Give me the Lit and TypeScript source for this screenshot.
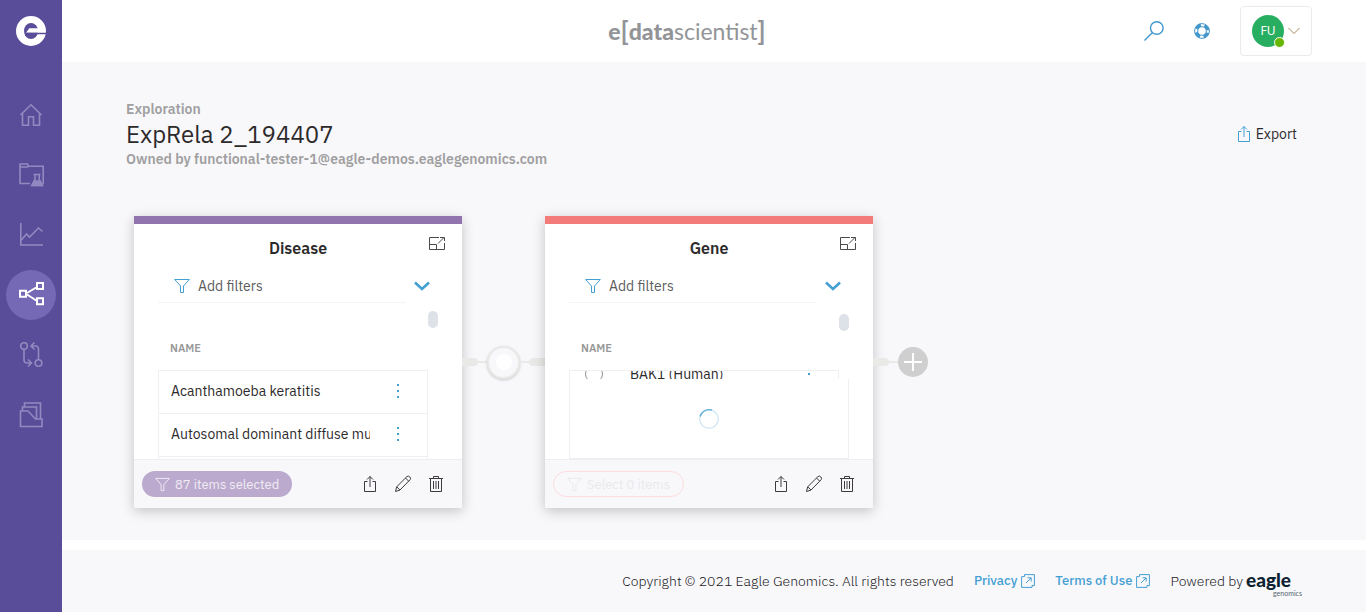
import { LitElement, html, svg, css, nothing } from "lit";
import { customElement, property } from "lit/decorators.js";
import { classMap } from "lit/directives/class-map.js";

const resets = css`
  * {
    box-sizing: border-box;
  }
  button {
    font: inherit;
    color: inherit;
    background: none;
    border: 0;
    padding: 0;
    margin: 0;
    cursor: pointer;
    display: inline-flex;
    align-items: center;
    justify-content: center;
  }
  a {
    color: inherit;
    text-decoration: none;
  }
  svg {
    display: block;
    flex: none;
    fill: none;
    stroke: currentColor;
  }
`;

const shareIcon = html`<svg width="14" height="18" viewBox="0 0 14 18" aria-hidden="true">
  <path d="M4.5 6.5h-3v10h11v-10h-3M7 12V1.5M4 4.5l3-3 3 3" />
</svg>`;

const funnelIcon = (size: number) => html`<svg width=${size} height=${size} viewBox="0 0 16 16" aria-hidden="true">
  <path d="M.7 1.5h14.6L9.5 8v6.5h-3V8z" />
</svg>`;

const popoutIcon = html`<svg width="14" height="14" viewBox="0 0 14 14" aria-hidden="true">
  <path d="M3.5 2.6V.6h9.9v11H11M3.5 2.6H.6v10.8h10.400v-2M5 9l5-5M6.5 3.8h3.7v3.7" />
</svg>`;

const navIcons = {
  home: svg`<path d="M1.500 13 12 2.800 22.500 13M3.500 11.500V23.300h6v-8.500h5v8.500h6V11.500" />`,
  projects: svg`<path d="M11 21.500H1V2h7.500l1 2.200h14.700v18M1 5h7.500l1-.8" />
    <path d="M14.500 12.500h7M16 13v4.500l-3.200 6h10.600l-3.200-6V13" />
    <path d="M15.300 19h5.500l2.300 4.500H13z" fill="currentColor" />`,
  charts: svg`<path d="M1.800 1v22H24M2 18.500l5.500-6.500 3 3 9-9 4 3.500" />`,
  relations: svg`<path d="M1 8.700h6v6H1zM18 1h6v6h-6zM18 16.300h6v6h-6zM8 11l10-6M8 12.500l10 6.500" />`,
  compare: svg`<circle cx="5" cy="4" r="3.300" /><circle cx="19.500" cy="21" r="3.300" />
    <path d="M5 7.500V18q0 3 3 3h4M9 17.500l3.500 3.500L9 24.500M19.500 17.500V7q0-3-3-3h-4M15.500.5 12 4l3.500 3.500" />`,
  files: svg`<path d="M1.500 9v15.500H23V17h-6.500L9 9zM3.500 9V5h14v12M5.500 5V1H21.500V17" />`,
};

@customElement("side-nav")
export class SideNav extends LitElement {
  static styles = [
    resets,
    css`
      :host {
        display: block;
        background: #594c99;
        color: #9389c0;
      }
      .brand {
        display: flex;
        height: 62px;
        align-items: center;
        justify-content: center;
        color: #fff;
      }
      nav {
        display: flex;
        flex-direction: column;
        align-items: center;
        gap: 10px;
        padding-top: 28px;
      }
      .item {
        display: flex;
        width: 50px;
        height: 50px;
        border-radius: 50%;
        align-items: center;
        justify-content: center;
      }
      .item svg {
        stroke-width: 1.6;
      }
      .active {
        background: #7568b5;
        color: #fff;
      }
      .active svg {
        stroke-width: 2;
      }
    `,
  ];

  render() {
    const items: [string, unknown][] = [
      ["Home", navIcons.home],
      ["Projects", navIcons.projects],
      ["Charts", navIcons.charts],
      ["Explorations", navIcons.relations],
      ["Compare", navIcons.compare],
      ["Files", navIcons.files],
    ];
    return html`
      <a class="brand" href="#" aria-label="Eagle Genomics">
        <svg width="30" height="30" viewBox="0 0 30 30" aria-hidden="true">
          <circle cx="15" cy="15" r="15" fill="currentColor" stroke="none" />
          <ellipse cx="15" cy="15" rx="7" ry="8" fill="#594c99" stroke="none" />
          <path d="M10 16.800l3.300-4.500H23v4.500z" fill="currentColor" stroke="none" />
          <path d="M9 16.800h21v1.500H20.500V20H9z" fill="#594c99" stroke="none" />
        </svg>
      </a>
      <nav>
        ${items.map(
          ([label, icon]) => html`<a
            href="#"
            aria-label=${label}
            class=${classMap({ item: true, active: label === "Explorations" })}
          >
            <svg width="26" height="26" viewBox="-1 0 26 26" aria-hidden="true">${icon}</svg>
          </a>`
        )}
      </nav>
    `;
  }
}

@customElement("top-bar")
export class TopBar extends LitElement {
  static styles = [
    resets,
    css`
      :host {
        display: grid;
        grid-template-columns: 1fr auto 1fr;
        align-items: center;
        height: 62px;
        padding-right: 54px;
        background: #fff;
      }
      .logo {
        grid-column: 2;
        display: flex;
        align-items: center;
        font: 400 23px/28px Lato, sans-serif;
        color: #929497;
      }
      .logo b {
        font-weight: 900;
      }
      .logo .bracket {
        font-weight: 700;
        font-size: 26px;
      }
      .tools {
        display: flex;
        justify-content: flex-end;
        align-items: center;
        gap: 30px;
        color: #4398cb;
      }
      .account {
        width: 72px;
        height: 50px;
        border: 1px solid #ebebeb;
        border-radius: 4px;
        gap: 4px;
        color: #a48c5a;
      }
      .avatar {
        position: relative;
        display: grid;
        place-items: center;
        width: 32px;
        height: 32px;
        border-radius: 50%;
        background: #27ae60;
        color: #fff;
        font: 400 12px/16px "Noto Sans", sans-serif;
      }
      .status {
        position: absolute;
        right: -1px;
        bottom: -1px;
        width: 11px;
        height: 11px;
        border: 1px solid #fff;
        border-radius: 50%;
        background: #68b604;
      }
    `,
  ];

  render() {
    return html`
      <div class="logo">
        <b>e</b><span class="bracket">[</span><b>data</b><span>scientist</span><span class="bracket">]</span>
      </div>
      <div class="tools">
        <button aria-label="Search">
          <svg width="20" height="20" viewBox="0 0 20 20" stroke-width="1.400" aria-hidden="true">
            <circle cx="12.800" cy="7" r="6.300" />
            <path d="M8.300 11.700.5 19.500" />
          </svg>
        </button>
        <button aria-label="Help">
          <svg width="16" height="16" viewBox="0 0 16 16" aria-hidden="true">
            <circle cx="8" cy="8" r="7.400" />
            <circle cx="8" cy="8" r="4.300" />
            <circle cx="8" cy="8" r="5.900" stroke-width="3.200" stroke-dasharray="5.630 3.637" stroke-dashoffset="-1.820" />
          </svg>
        </button>
        <button class="account" aria-label="Account">
          <span class="avatar">FU<span class="status"></span></span>
          <svg width="12" height="8" viewBox="0 0 12 8" aria-hidden="true"><path d="M.5 1 6 6.500 11.500 1" /></svg>
        </button>
      </div>
    `;
  }
}

interface Row {
  name: string;
  selectable?: boolean;
}

@customElement("entity-card")
export class EntityCard extends LitElement {
  @property() heading = "";
  @property() action = "";
  @property() tone = "violet";
  @property({ type: Boolean }) loading = false;
  @property({ attribute: false }) rows: Row[] = [];

  static styles = [
    resets,
    css`
      :host {
        display: block;
        flex: none;
        width: 328px;
      }
      .card {
        background: #fff;
        border-top: 8px solid #9173ae;
        box-shadow: 0 3px 12px rgba(0, 0, 0, 0.22);
      }
      .card.coral {
        border-top-color: #f37c7a;
      }
      .head {
        display: grid;
        grid-template-columns: 1fr auto 1fr;
        height: 48px;
        align-items: center;
        padding: 0 17px;
      }
      h2 {
        grid-column: 2;
        margin: 0;
        font-size: 16px;
        line-height: 20px;
        font-weight: 600;
        color: #2d2a2b;
      }
      .expand {
        justify-self: end;
        align-self: start;
        margin-top: 12px;
        color: #4a4a4a;
      }
      .filters {
        display: flex;
        padding: 0 24px;
        height: 31px;
      }
      .add {
        flex: 0 0 248px;
        justify-content: flex-start;
        gap: 8px;
        padding: 0 0 2px 16px;
        border-bottom: 1px solid #f4f4f4;
        color: #5c5c5c;
      }
      .add svg,
      .toggle {
        color: #459fd3;
      }
      .toggle {
        width: 32px;
        padding-bottom: 3px;
      }
      .body {
        position: relative;
        display: flex;
        align-items: flex-start;
        height: 156px;
        padding: 0 24px;
        overflow: hidden;
      }
      .thumb {
        flex: none;
        width: 10px;
        height: 17px;
        margin-top: 8px;
        border-radius: 5px;
        background: #dde1e8;
      }
      .coral .thumb {
        margin-top: 11px;
      }
      table,
      thead,
      thead tr {
        display: block;
      }
      table {
        flex: none;
        width: 270px;
      }
      thead th {
        display: block;
        padding: 37px 12px 14px;
        text-align: left;
        font-size: 11px;
        line-height: 16px;
        font-weight: 600;
        color: #989898;
      }
      tbody {
        display: flex;
        flex-direction: column;
        border: 1px solid #efefef;
        border-bottom: 0;
      }
      tbody tr {
        flex: none;
        display: flex;
        align-items: center;
        height: 43px;
        border-bottom: 1px solid #efefef;
        padding: 0 2px 2px 12px;
      }
      td {
        padding: 0;
        line-height: 20px;
      }
      .name {
        flex: none;
        width: 199px;
        overflow: hidden;
        white-space: nowrap;
        color: #2d2a2b;
      }
      .pick + .name {
        width: 151px;
      }
      .pick {
        flex: none;
        width: 48px;
        padding-left: 3px;
        height: 18px;
      }
      .pick input {
        display: block;
        appearance: none;
        width: 18px;
        height: 18px;
        margin: 0;
        border: 1px solid #8a9299;
        border-radius: 50%;
      }
      .menu {
        flex: 1;
        display: flex;
        justify-content: center;
        color: #459fd3;
      }
      .loading tbody {
        height: 10px;
        justify-content: center;
        overflow: hidden;
      }
      .loader {
        position: absolute;
        left: 24px;
        bottom: 0;
        width: 280px;
        height: 80px;
        display: grid;
        place-items: center;
        background: #fff;
        border: 1px solid #efefef;
        border-top: 0;
      }
      .foot {
        display: flex;
        align-items: center;
        justify-content: space-between;
        height: 49px;
        padding: 0 14px 0 8px;
        background: #f8f8fb;
        border-top: 1px solid #eee;
      }
      .select {
        height: 26px;
        padding: 1px 13px 0;
        gap: 5px;
        border-radius: 13px;
        background: #bbaacd;
        color: #f1ecf6;
        font-size: 13px;
        line-height: 16px;
        white-space: nowrap;
      }
      .coral .select {
        border: 1px solid #fddddd;
        background: none;
        color: #e9e9ea;
      }
      .actions {
        display: flex;
        gap: 9px;
        color: #3f3a40;
      }
      .actions button {
        width: 24px;
        height: 24px;
      }
    `,
  ];

  private renderRow(row: Row) {
    return html`<tr>
      ${row.selectable
        ? html`<td class="pick"><input type="checkbox" aria-label=${row.name} /></td>`
        : nothing}
      <td class="name">${row.name}</td>
      <td class="menu">
        <button aria-label="Row menu">
          <svg width="4" height="16" viewBox="0 0 4 16" aria-hidden="true">
            <path d="M1 1h2v2H1zM1 7h2v2H1zM1 13h2v2H1z" fill="currentColor" stroke="none" />
          </svg>
        </button>
      </td>
    </tr>`;
  }

  render() {
    return html`
      <section class=${classMap({ card: true, coral: this.tone === "coral", loading: this.loading })}>
        <header class="head">
          <h2>${this.heading}</h2>
          <button class="expand" aria-label="Expand">
            <svg width="16" height="15" viewBox="0 0 16 15" aria-hidden="true">
              <path d="M10 1.500H.5v12h15V7M.5 8.500h7v5M9 7.500l6-6M11 1.500h4.500V5" />
            </svg>
          </button>
        </header>
        <div class="filters">
          <button class="add">${funnelIcon(16)}Add filters</button>
          <button class="toggle" aria-label="Show filters">
            <svg width="16" height="10" viewBox="0 0 16 10" stroke-width="2.600" aria-hidden="true">
              <path d="M1 1.500l7 6.500 7-6.500" />
            </svg>
          </button>
        </div>
        <div class="body">
          <table>
            <thead>
              <tr><th scope="col">NAME</th></tr>
            </thead>
            <tbody>
              ${this.rows.map((row) => this.renderRow(row))}
            </tbody>
          </table>
          <span class="thumb"></span>
          ${this.loading
            ? html`<div class="loader" role="status" aria-label="Loading">
                <svg width="20" height="20" viewBox="0 0 20 20" aria-hidden="true">
                  <circle cx="10" cy="10" r="9.300" stroke="#d3e8f4" stroke-width="1.400" />
                  <path d="M1 7.500A9.300 9.300 0 0 1 13 1.200" stroke="#5fb0da" stroke-width="1.400" />
                </svg>
              </div>`
            : nothing}
        </div>
        <footer class="foot">
          <button class="select">${funnelIcon(15)}${this.action}</button>
          <div class="actions">
            <button aria-label="Export">${shareIcon}</button>
            <button aria-label="Edit">
              <svg width="18" height="18" viewBox="0 0 18 18" aria-hidden="true">
                <path d="M1.500 16.500l1.200-4.700L13 1.500q1.500-1 2.800.4 1.300 1.400.4 2.700L6 15zM2.700 11.800 6 15M11.500 3l3.200 3.200" />
              </svg>
            </button>
            <button aria-label="Delete">
              <svg width="14" height="18" viewBox="0 0 14 18" aria-hidden="true">
                <path d="M0 3.500h14M4.500 3.500v-2h5v2M1.500 3.500v13h11v-13M4.500 6v8M7 6v8M9.500 6v8" />
              </svg>
            </button>
          </div>
        </footer>
      </section>
    `;
  }
}

@customElement("app-root")
export class AppRoot extends LitElement {
  static styles = [
    resets,
    css`
      :host {
        display: grid;
        grid-template-columns: 62px minmax(0, 1fr);
        min-height: 100vh;
        background: #fff;
        font: 400 14px/20px "IBM Plex Sans", "Noto Sans", sans-serif;
        color: #2d2a2b;
      }
      .page {
        display: flex;
        flex-direction: column;
      }
      main {
        flex: 1;
        background: #f8f8fb;
        padding: 38px 64px 32px;
        margin-bottom: 10px;
      }
      .intro {
        display: flex;
        align-items: center;
        justify-content: space-between;
      }
      .meta {
        margin: 0;
        line-height: 18px;
        font-weight: 600;
        color: #a09fa0;
      }
      h1 {
        margin: 0;
        font-size: 24px;
        line-height: 32px;
        font-weight: 400;
      }
      .export {
        gap: 5px;
        padding: 0 5px;
      }
      .export svg {
        color: #459fd3;
      }
      .chain {
        display: flex;
        align-items: center;
        margin-top: 48px;
        padding-left: 8px;
      }
      .link {
        flex: none;
        display: flex;
        align-items: center;
        width: 83px;
      }
      .link.open {
        width: auto;
      }
      .cap {
        width: 16px;
        height: 8px;
        background: #e9e9e7;
        border-radius: 0 4px 4px 0;
      }
      .cap.end {
        border-radius: 4px 0 0 4px;
      }
      .wire {
        flex: 1 0 9px;
        height: 2px;
        background: #e9e9e7;
      }
      .joint {
        display: grid;
        place-items: center;
        width: 33px;
        height: 33px;
        border: 2px solid #e9e9e7;
        border-radius: 50%;
        background: #f8f8fb;
        box-shadow: 0 1px 3px rgba(0, 0, 0, 0.2);
      }
      .joint::before {
        content: "";
        width: 16px;
        height: 16px;
        border-radius: 50%;
        background: #fff;
      }
      .plus {
        width: 30px;
        height: 30px;
        border-radius: 50%;
        background: #cfcfcf;
        color: #fff;
      }
      .bottom {
        display: flex;
        align-items: center;
        justify-content: flex-end;
        gap: 20px;
        height: 62px;
        padding-right: 64px;
        background: #f8f8fb;
        font-weight: 300;
        color: #1c1a1b;
        white-space: nowrap;
      }
      .legal {
        display: flex;
        align-items: center;
        gap: 4px;
        color: #459fd3;
        font-size: 13px;
        font-weight: 500;
      }
      .powered {
        display: flex;
        align-items: center;
        gap: 3px;
      }
      .eagle {
        display: flex;
        flex-direction: column;
        width: 56px;
        padding-top: 4px;
        color: #0c2231;
        font: 900 19px/20px Lato, sans-serif;
      }
      .eagle small {
        align-self: flex-end;
        font: 400 7px/6px Lato, sans-serif;
        color: #56646e;
      }
    `,
  ];

  private diseases: Row[] = [
    { name: "Acanthamoeba keratitis" },
    { name: "Autosomal dominant diffuse mutilating palmoplantar keratoderma" },
    { name: "" },
  ];

  private genes: Row[] = [{ name: "BAK1 (Human)", selectable: true }];

  render() {
    return html`
      <side-nav></side-nav>
      <div class="page">
        <top-bar></top-bar>
        <main>
          <div class="intro">
            <div>
              <p class="meta">Exploration</p>
              <h1>ExpRela 2_194407</h1>
              <p class="meta">Owned by functional-tester-1@eagle-demos.eaglegenomics.com</p>
            </div>
            <button class="export">${shareIcon}Export</button>
          </div>
          <div class="chain">
            <entity-card heading="Disease" action="87 items selected" .rows=${this.diseases}></entity-card>
            <div class="link">
              <span class="cap"></span><span class="wire"></span><span class="joint"></span><span class="wire"></span
              ><span class="cap end"></span>
            </div>
            <entity-card heading="Gene" action="Select 0 items" tone="coral" loading .rows=${this.genes}></entity-card>
            <div class="link open">
              <span class="cap"></span><span class="wire"></span>
              <button class="plus" aria-label="Add entity">
                <svg width="18" height="18" viewBox="0 0 18 18" stroke-width="2" aria-hidden="true">
                  <path d="M9 0v18M0 9h18" />
                </svg>
              </button>
            </div>
          </div>
        </main>
        <footer class="bottom">
          <span>Copyright © 2021 Eagle Genomics. All rights reserved</span>
          <a class="legal" href="#">Privacy ${popoutIcon}</a>
          <a class="legal" href="#">Terms of Use ${popoutIcon}</a>
          <span class="powered">Powered by <span class="eagle">eagle<small>genomics</small></span></span>
        </footer>
      </div>
    `;
  }
}
